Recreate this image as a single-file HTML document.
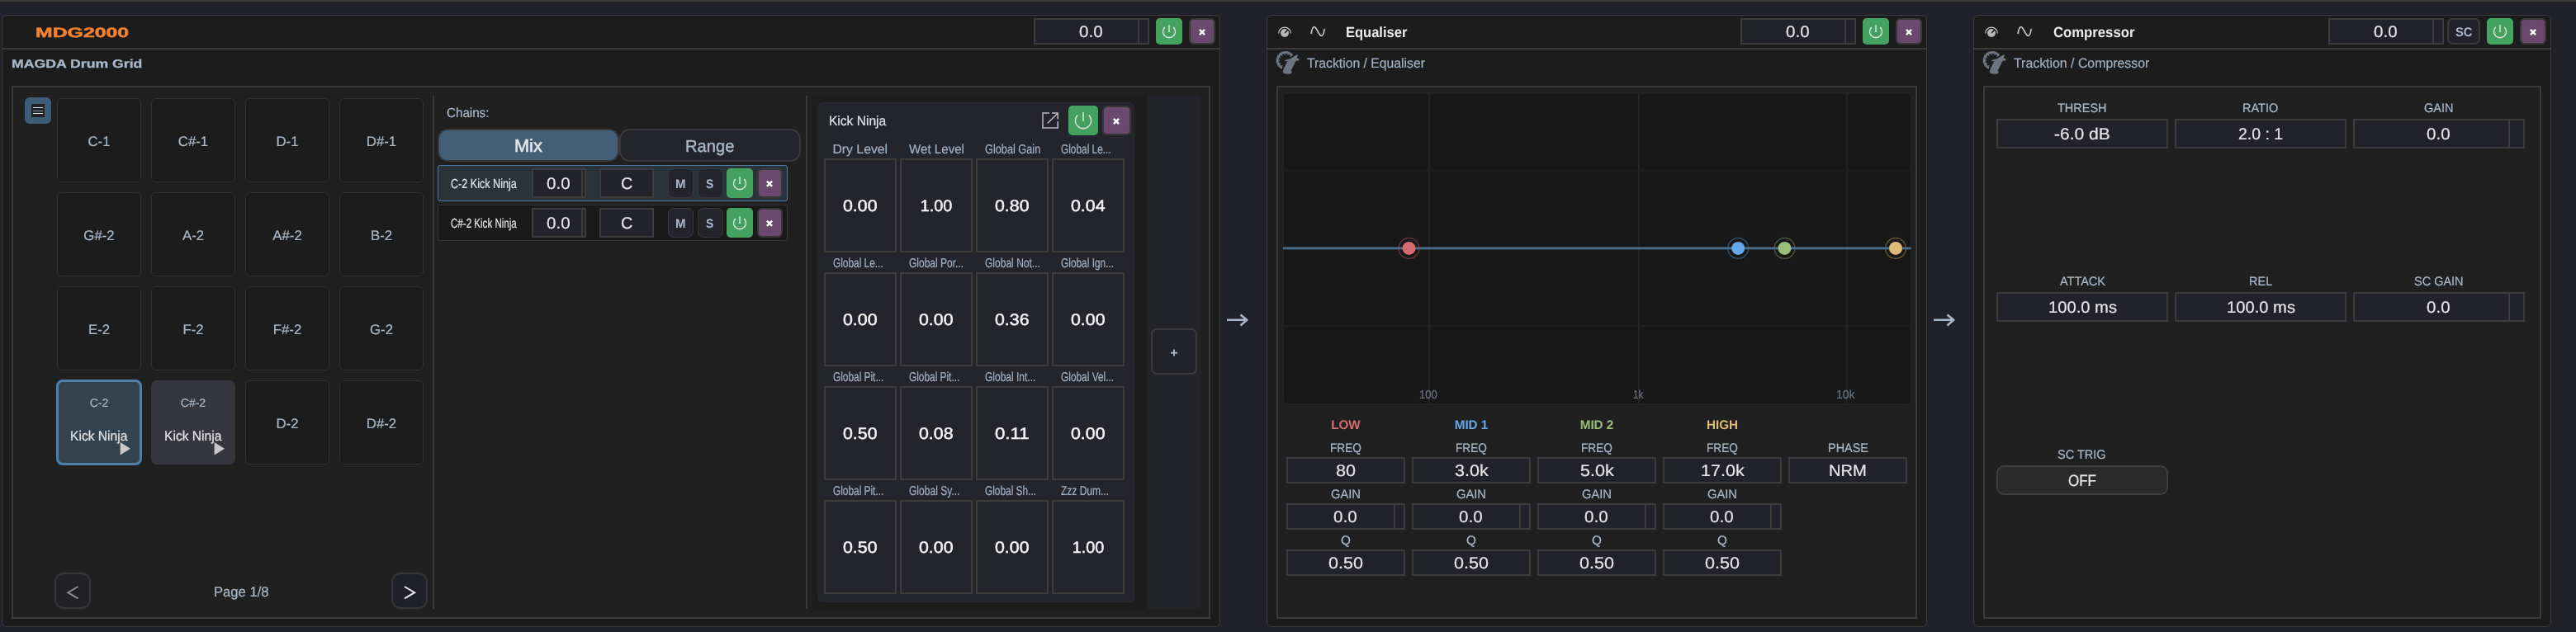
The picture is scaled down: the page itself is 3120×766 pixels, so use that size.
<!DOCTYPE html><html><head><meta charset="utf-8"><title>Device chain</title><style>
html,body{margin:0;padding:0}body{width:3120px;height:766px;overflow:hidden;position:relative;background:#21212b;font-family:"Liberation Sans",sans-serif}
.b{position:absolute;box-sizing:border-box}.t{position:absolute;white-space:nowrap;line-height:1;transform-origin:0 0;text-rendering:geometricPrecision}
#root{position:absolute;left:0;top:0;width:3120px;height:766px;will-change:transform}
</style></head><body><div id="root">
<div class="b" style="left:0px;top:0px;width:3120px;height:2px;background:#3b3b3b;"></div>
<div class="b" style="left:2px;top:18px;width:1476px;height:742px;background:#1c1c1c;border:1px solid #3a3a3a;border-radius:6px;"></div>
<div class="b" style="left:3px;top:58px;width:1474px;height:2px;background:#3a3a3a;"></div>
<div class="b" style="left:14px;top:104px;width:1452px;height:646px;background:#202020;border:2px solid #3a3a3a;"></div>
<div class="b" style="left:1252px;top:22px;width:140px;height:32px;background:#22222a;border:2px solid #3c3c3c;"></div>
<div class="b" style="left:1378px;top:24px;width:2px;height:28px;background:#3c3c3c;"></div>
<span class="t " style="left:1307.20px;top:30.00px;font-size:19.75px;color:#e6e6e6;-webkit-text-stroke:0.22px #e6e6e6;transform:scaleX(1.0418);">0.0</span>
<div class="b" style="left:1400px;top:22px;width:32px;height:32px;background:#43a25f;border-radius:5px"></div>
<svg class="b" style="left:0;top:0" width="3120" height="766"><path d="M1421.57 33.18 A7.5 7.5 0 1 1 1410.43 33.18" fill="none" stroke="#e4e4e4" stroke-width="1.4" stroke-linecap="round"/><path d="M1416.00 30.10 V39.00" stroke="#d4e8da" stroke-width="1.5" fill="none"/></svg>
<div class="b" style="left:1440px;top:22px;width:32px;height:32px;background:#6b486d;border:2px solid #383838;border-radius:6px;"></div>
<svg class="b" style="left:0;top:0" width="3120" height="766"><path d="M1452.90 35.90 L1459.10 42.10 M1459.10 35.90 L1452.90 42.10" stroke="#fff" stroke-width="2.4" fill="none"/></svg>
<span class="t " style="left:42.60px;top:32.00px;font-size:16.50px;color:#f08232;font-weight:bold;-webkit-text-stroke:0.5px #f08232;transform:scaleX(1.5045);">MDG2000</span>
<span class="t " style="left:14.40px;top:71.00px;font-size:14.25px;color:#a8b8c8;font-weight:bold;-webkit-text-stroke:0.3px #a8b8c8;transform:scaleX(1.2399);">MAGDA Drum Grid</span>
<div class="b" style="left:30px;top:118px;width:32px;height:32px;background:#3e5c75;border-radius:6px;"></div>
<div class="b" style="left:38px;top:126px;width:16px;height:16px;background:#22222a;"></div>
<div class="b" style="left:40px;top:130px;width:12px;height:1px;background:#e4e4e4;"></div>
<div class="b" style="left:40px;top:133.5px;width:12px;height:1.5px;background:#8a8a8a;"></div>
<div class="b" style="left:40px;top:137px;width:12px;height:1px;background:#e4e4e4;"></div>
<div class="b" style="left:69px;top:119px;width:102px;height:102px;background:#1c1c1c;border:1px solid #303030;border-radius:6px;"></div>
<span class="t " style="left:106.52px;top:164.00px;font-size:16.75px;color:#a8b8c8;-webkit-text-stroke:0.22px #a8b8c8;">C-1</span>
<div class="b" style="left:183px;top:119px;width:102px;height:102px;background:#1c1c1c;border:1px solid #303030;border-radius:6px;"></div>
<span class="t " style="left:215.83px;top:164.00px;font-size:16.75px;color:#a8b8c8;-webkit-text-stroke:0.22px #a8b8c8;">C#-1</span>
<div class="b" style="left:297px;top:119px;width:102px;height:102px;background:#1c1c1c;border:1px solid #303030;border-radius:6px;"></div>
<span class="t " style="left:334.52px;top:164.00px;font-size:16.75px;color:#a8b8c8;-webkit-text-stroke:0.22px #a8b8c8;">D-1</span>
<div class="b" style="left:411px;top:119px;width:102px;height:102px;background:#1c1c1c;border:1px solid #303030;border-radius:6px;"></div>
<span class="t " style="left:443.83px;top:164.00px;font-size:16.75px;color:#a8b8c8;-webkit-text-stroke:0.22px #a8b8c8;">D#-1</span>
<div class="b" style="left:69px;top:233px;width:102px;height:102px;background:#1c1c1c;border:1px solid #303030;border-radius:6px;"></div>
<span class="t " style="left:101.37px;top:278.00px;font-size:16.75px;color:#a8b8c8;-webkit-text-stroke:0.22px #a8b8c8;">G#-2</span>
<div class="b" style="left:183px;top:233px;width:102px;height:102px;background:#1c1c1c;border:1px solid #303030;border-radius:6px;"></div>
<span class="t " style="left:220.98px;top:278.00px;font-size:16.75px;color:#a8b8c8;-webkit-text-stroke:0.22px #a8b8c8;">A-2</span>
<div class="b" style="left:297px;top:233px;width:102px;height:102px;background:#1c1c1c;border:1px solid #303030;border-radius:6px;"></div>
<span class="t " style="left:330.33px;top:278.00px;font-size:16.75px;color:#a8b8c8;-webkit-text-stroke:0.22px #a8b8c8;">A#-2</span>
<div class="b" style="left:411px;top:233px;width:102px;height:102px;background:#1c1c1c;border:1px solid #303030;border-radius:6px;"></div>
<span class="t " style="left:448.98px;top:278.00px;font-size:16.75px;color:#a8b8c8;-webkit-text-stroke:0.22px #a8b8c8;">B-2</span>
<div class="b" style="left:69px;top:347px;width:102px;height:102px;background:#1c1c1c;border:1px solid #303030;border-radius:6px;"></div>
<span class="t " style="left:106.98px;top:392.00px;font-size:16.75px;color:#a8b8c8;-webkit-text-stroke:0.22px #a8b8c8;">E-2</span>
<div class="b" style="left:183px;top:347px;width:102px;height:102px;background:#1c1c1c;border:1px solid #303030;border-radius:6px;"></div>
<span class="t " style="left:221.44px;top:392.00px;font-size:16.75px;color:#a8b8c8;-webkit-text-stroke:0.22px #a8b8c8;">F-2</span>
<div class="b" style="left:297px;top:347px;width:102px;height:102px;background:#1c1c1c;border:1px solid #303030;border-radius:6px;"></div>
<span class="t " style="left:330.79px;top:392.00px;font-size:16.75px;color:#a8b8c8;-webkit-text-stroke:0.22px #a8b8c8;">F#-2</span>
<div class="b" style="left:411px;top:347px;width:102px;height:102px;background:#1c1c1c;border:1px solid #303030;border-radius:6px;"></div>
<span class="t " style="left:448.06px;top:392.00px;font-size:16.75px;color:#a8b8c8;-webkit-text-stroke:0.22px #a8b8c8;">G-2</span>
<div class="b" style="left:68px;top:460px;width:104px;height:104px;background:#33424f;border:3px solid #4f80aa;border-radius:8px;"></div>
<span class="t " style="left:108.73px;top:481.00px;font-size:14.00px;color:#a8b8c8;-webkit-text-stroke:0.22px #a8b8c8;">C-2</span>
<span class="t " style="left:85.25px;top:521.00px;font-size:16.75px;color:#e2e2e2;-webkit-text-stroke:0.22px #e2e2e2;transform:scaleX(0.9324);">Kick Ninja</span>
<svg class="b" style="left:145px;top:535px" width="14" height="18"><path d="M0.6 1.1 L13 8.85 L0.6 16.6 Z" fill="#c8c8c8"/></svg>
<div class="b" style="left:183px;top:461px;width:102px;height:102px;background:#36363e;border-radius:7px;"></div>
<span class="t " style="left:218.81px;top:481.00px;font-size:14.00px;color:#a8b8c8;-webkit-text-stroke:0.22px #a8b8c8;">C#-2</span>
<span class="t " style="left:199.25px;top:521.00px;font-size:16.75px;color:#e2e2e2;-webkit-text-stroke:0.22px #e2e2e2;transform:scaleX(0.9324);">Kick Ninja</span>
<svg class="b" style="left:259px;top:535px" width="14" height="18"><path d="M0.6 1.1 L13 8.85 L0.6 16.6 Z" fill="#c8c8c8"/></svg>
<div class="b" style="left:297px;top:461px;width:102px;height:102px;background:#1c1c1c;border:1px solid #303030;border-radius:6px;"></div>
<span class="t " style="left:334.52px;top:506.00px;font-size:16.75px;color:#a8b8c8;-webkit-text-stroke:0.22px #a8b8c8;">D-2</span>
<div class="b" style="left:411px;top:461px;width:102px;height:102px;background:#1c1c1c;border:1px solid #303030;border-radius:6px;"></div>
<span class="t " style="left:443.83px;top:506.00px;font-size:16.75px;color:#a8b8c8;-webkit-text-stroke:0.22px #a8b8c8;">D#-2</span>
<div class="b" style="left:66px;top:694px;width:44px;height:44px;background:#222226;border:2px solid #363636;border-radius:11px;"></div>
<div class="b" style="left:474px;top:694px;width:44px;height:44px;background:#20202a;border:2px solid #363636;border-radius:11px;"></div>
<svg class="b" style="left:0;top:0" width="3120" height="766"><path d="M94.5 711 L82.3 718.2 L94.5 725.4" stroke="#8e8e8e" stroke-width="2" fill="none"/><path d="M490 711 L502.2 718.2 L490 725.4" stroke="#e8e8e8" stroke-width="2" fill="none"/></svg>
<span class="t " style="left:258.70px;top:709.00px;font-size:17.00px;color:#a8b8c8;-webkit-text-stroke:0.22px #a8b8c8;transform:scaleX(0.9782);">Page 1/8</span>
<div class="b" style="left:524px;top:116px;width:2px;height:622px;background:#393939;"></div>
<div class="b" style="left:976px;top:116px;width:2px;height:622px;background:#393939;"></div>
<span class="t " style="left:540.60px;top:130.00px;font-size:16.00px;color:#a8b8c8;-webkit-text-stroke:0.22px #a8b8c8;transform:scaleX(0.9476);">Chains:</span>
<div class="b" style="left:530px;top:156px;width:220px;height:40px;background:#446078;border:2px solid #3a3a3a;border-radius:13px;"></div>
<div class="b" style="left:750px;top:156px;width:220px;height:40px;background:#24242c;border:2px solid #3a3a3a;border-radius:13px;"></div>
<span class="t " style="left:623.00px;top:166.00px;font-size:21.75px;color:#e6e6e6;-webkit-text-stroke:0.55px #e6e6e6;">Mix</span>
<span class="t " style="left:830.20px;top:168.00px;font-size:20.50px;color:#a8b8c8;-webkit-text-stroke:0.45px #a8b8c8;transform:scaleX(0.9822);">Range</span>
<div class="b" style="left:530px;top:200px;width:424px;height:44px;background:#2a323a;border:1px solid #4a7aa8;border-radius:3px;"></div>
<span class="t " style="left:546.10px;top:216.00px;font-size:16.00px;color:#e2e2e2;-webkit-text-stroke:0.22px #e2e2e2;transform:scaleX(0.7867);">C-2 Kick Ninja</span>
<div class="b" style="left:644px;top:204px;width:66px;height:36px;background:#23232b;border:2px solid #3c3c3c;"></div>
<div class="b" style="left:704px;top:206px;width:2px;height:32px;background:#3c3c3c;"></div>
<span class="t " style="left:662.30px;top:214.00px;font-size:19.75px;color:#e6e6e6;-webkit-text-stroke:0.22px #e6e6e6;transform:scaleX(1.0418);">0.0</span>
<div class="b" style="left:726px;top:204px;width:66px;height:36px;background:#23232b;border:2px solid #3c3c3c;"></div>
<span class="t " style="left:751.89px;top:214.00px;font-size:19.75px;color:#e6e6e6;-webkit-text-stroke:0.22px #e6e6e6;">C</span>
<div class="b" style="left:808.5px;top:204px;width:31px;height:35.5px;background:#24242c;border:1.5px solid #3a3a3a;border-radius:7px;"></div>
<div class="b" style="left:844.5px;top:204px;width:31px;height:35.5px;background:#24242c;border:1.5px solid #3a3a3a;border-radius:7px;"></div>
<span class="t " style="left:817.80px;top:216.00px;font-size:15.25px;color:#a8b8d0;font-weight:bold;transform:scaleX(0.9816);">M</span>
<span class="t " style="left:855.45px;top:216.00px;font-size:15.25px;color:#a8b8d0;font-weight:bold;transform:scaleX(0.9072);">S</span>
<div class="b" style="left:880px;top:204px;width:32px;height:36px;background:#43a25f;border-radius:5px"></div>
<svg class="b" style="left:0;top:0" width="3120" height="766"><path d="M901.57 217.18 A7.5 7.5 0 1 1 890.43 217.18" fill="none" stroke="#e4e4e4" stroke-width="1.4" stroke-linecap="round"/><path d="M896.00 214.10 V223.00" stroke="#d4e8da" stroke-width="1.5" fill="none"/></svg>
<div class="b" style="left:916.5px;top:204px;width:31px;height:35.5px;background:#6b486d;border:2px solid #383838;border-radius:6px;"></div>
<svg class="b" style="left:0;top:0" width="3120" height="766"><path d="M928.90 219.65 L935.10 225.85 M935.10 219.65 L928.90 225.85" stroke="#fff" stroke-width="2.4" fill="none"/></svg>
<div class="b" style="left:530px;top:248px;width:424px;height:44px;background:#1a1a1a;border:1px solid #343434;border-radius:3px;"></div>
<span class="t " style="left:546.10px;top:264.00px;font-size:16.00px;color:#e2e2e2;-webkit-text-stroke:0.22px #e2e2e2;transform:scaleX(0.7234);">C#-2 Kick Ninja</span>
<div class="b" style="left:644px;top:252px;width:66px;height:36px;background:#23232b;border:2px solid #3c3c3c;"></div>
<div class="b" style="left:704px;top:254px;width:2px;height:32px;background:#3c3c3c;"></div>
<span class="t " style="left:662.30px;top:262.00px;font-size:19.75px;color:#e6e6e6;-webkit-text-stroke:0.22px #e6e6e6;transform:scaleX(1.0418);">0.0</span>
<div class="b" style="left:726px;top:252px;width:66px;height:36px;background:#23232b;border:2px solid #3c3c3c;"></div>
<span class="t " style="left:751.89px;top:262.00px;font-size:19.75px;color:#e6e6e6;-webkit-text-stroke:0.22px #e6e6e6;">C</span>
<div class="b" style="left:808.5px;top:252px;width:31px;height:35.5px;background:#24242c;border:1.5px solid #3a3a3a;border-radius:7px;"></div>
<div class="b" style="left:844.5px;top:252px;width:31px;height:35.5px;background:#24242c;border:1.5px solid #3a3a3a;border-radius:7px;"></div>
<span class="t " style="left:817.80px;top:264.00px;font-size:15.25px;color:#a8b8d0;font-weight:bold;transform:scaleX(0.9816);">M</span>
<span class="t " style="left:855.45px;top:264.00px;font-size:15.25px;color:#a8b8d0;font-weight:bold;transform:scaleX(0.9072);">S</span>
<div class="b" style="left:880px;top:252px;width:32px;height:36px;background:#43a25f;border-radius:5px"></div>
<svg class="b" style="left:0;top:0" width="3120" height="766"><path d="M901.57 265.18 A7.5 7.5 0 1 1 890.43 265.18" fill="none" stroke="#e4e4e4" stroke-width="1.4" stroke-linecap="round"/><path d="M896.00 262.10 V271.00" stroke="#d4e8da" stroke-width="1.5" fill="none"/></svg>
<div class="b" style="left:916.5px;top:252px;width:31px;height:35.5px;background:#6b486d;border:2px solid #383838;border-radius:6px;"></div>
<svg class="b" style="left:0;top:0" width="3120" height="766"><path d="M928.90 267.65 L935.10 273.85 M935.10 267.65 L928.90 273.85" stroke="#fff" stroke-width="2.4" fill="none"/></svg>
<div class="b" style="left:982px;top:116px;width:408px;height:622px;background:#1d1d1d;"></div>
<div class="b" style="left:1390px;top:116px;width:64px;height:622px;background:#23232a;"></div>
<div class="b" style="left:1394px;top:398px;width:56px;height:56px;background:#22222a;border:2px solid #3a3a3a;border-radius:7px;"></div>
<svg class="b" style="left:0;top:0" width="3120" height="766"><path d="M1418 427.6 H1426 M1422 423.6 V431.6" stroke="#b4c2d2" stroke-width="1.8" fill="none"/></svg>
<div class="b" style="left:990px;top:124px;width:384px;height:606px;background:#24242c;border:1px solid #2b2b32;border-radius:6px;"></div>
<span class="t " style="left:1004.30px;top:139.00px;font-size:16.50px;color:#dce2ea;-webkit-text-stroke:0.22px #dce2ea;transform:scaleX(0.9425);">Kick Ninja</span>
<svg class="b" style="left:0;top:0" width="3120" height="766"><path d="M1271 137 H1263 V155 H1281.2 V147 M1274 137 H1281.2 V144.5 M1281 137.2 L1268.7 149.5" stroke="#bcbcbc" stroke-width="1.5" fill="none"/></svg>
<div class="b" style="left:1294px;top:128px;width:36px;height:36px;background:#43a25f;border-radius:5px"></div>
<svg class="b" style="left:0;top:0" width="3120" height="766"><path d="M1319.13 139.78 A9.6 9.6 0 1 1 1304.87 139.78" fill="none" stroke="#e4e4e4" stroke-width="1.4" stroke-linecap="round"/><path d="M1312.00 136.00 V147.00" stroke="#d4e8da" stroke-width="1.5" fill="none"/></svg>
<div class="b" style="left:1334.5px;top:128.3px;width:35px;height:35.3px;background:#6b486d;border:2px solid #383838;border-radius:6px;"></div>
<svg class="b" style="left:0;top:0" width="3120" height="766"><path d="M1348.90 143.85 L1355.10 150.05 M1355.10 143.85 L1348.90 150.05" stroke="#fff" stroke-width="2.4" fill="none"/></svg>
<div class="b" style="left:998px;top:192px;width:88px;height:114px;background:#24242c;border:2px solid #3d3c3b;"></div>
<span class="t " style="left:1008.50px;top:174.00px;font-size:15.75px;color:#9fb0c4;-webkit-text-stroke:0.22px #9fb0c4;">Dry Level</span>
<span class="t " style="left:1021.25px;top:241.00px;font-size:19.75px;color:#f4f4f4;-webkit-text-stroke:0.5px #f4f4f4;transform:scaleX(1.0803);">0.00</span>
<div class="b" style="left:1090px;top:192px;width:88px;height:114px;background:#24242c;border:2px solid #3d3c3b;"></div>
<span class="t " style="left:1100.50px;top:174.00px;font-size:15.75px;color:#9fb0c4;-webkit-text-stroke:0.22px #9fb0c4;transform:scaleX(0.9603);">Wet Level</span>
<span class="t " style="left:1114.75px;top:241.00px;font-size:19.75px;color:#f4f4f4;-webkit-text-stroke:0.5px #f4f4f4;">1.00</span>
<div class="b" style="left:1182px;top:192px;width:88px;height:114px;background:#24242c;border:2px solid #3d3c3b;"></div>
<span class="t " style="left:1192.50px;top:174.00px;font-size:15.75px;color:#9fb0c4;-webkit-text-stroke:0.22px #9fb0c4;transform:scaleX(0.8081);">Global Gain</span>
<span class="t " style="left:1205.25px;top:241.00px;font-size:19.75px;color:#f4f4f4;-webkit-text-stroke:0.5px #f4f4f4;transform:scaleX(1.0803);">0.80</span>
<div class="b" style="left:1274px;top:192px;width:88px;height:114px;background:#24242c;border:2px solid #3d3c3b;"></div>
<span class="t " style="left:1284.50px;top:174.00px;font-size:15.75px;color:#9fb0c4;-webkit-text-stroke:0.22px #9fb0c4;transform:scaleX(0.7535);">Global Le...</span>
<span class="t " style="left:1297.25px;top:241.00px;font-size:19.75px;color:#f4f4f4;-webkit-text-stroke:0.5px #f4f4f4;transform:scaleX(1.0803);">0.04</span>
<div class="b" style="left:998px;top:330px;width:88px;height:114px;background:#24242c;border:2px solid #3d3c3b;"></div>
<span class="t " style="left:1008.50px;top:312.00px;font-size:15.75px;color:#9fb0c4;-webkit-text-stroke:0.22px #9fb0c4;transform:scaleX(0.7535);">Global Le...</span>
<span class="t " style="left:1021.25px;top:379.00px;font-size:19.75px;color:#f4f4f4;-webkit-text-stroke:0.5px #f4f4f4;transform:scaleX(1.0803);">0.00</span>
<div class="b" style="left:1090px;top:330px;width:88px;height:114px;background:#24242c;border:2px solid #3d3c3b;"></div>
<span class="t " style="left:1100.50px;top:312.00px;font-size:15.75px;color:#9fb0c4;-webkit-text-stroke:0.22px #9fb0c4;transform:scaleX(0.7624);">Global Por...</span>
<span class="t " style="left:1113.25px;top:379.00px;font-size:19.75px;color:#f4f4f4;-webkit-text-stroke:0.5px #f4f4f4;transform:scaleX(1.0803);">0.00</span>
<div class="b" style="left:1182px;top:330px;width:88px;height:114px;background:#24242c;border:2px solid #3d3c3b;"></div>
<span class="t " style="left:1192.50px;top:312.00px;font-size:15.75px;color:#9fb0c4;-webkit-text-stroke:0.22px #9fb0c4;transform:scaleX(0.7640);">Global Not...</span>
<span class="t " style="left:1205.25px;top:379.00px;font-size:19.75px;color:#f4f4f4;-webkit-text-stroke:0.5px #f4f4f4;transform:scaleX(1.0803);">0.36</span>
<div class="b" style="left:1274px;top:330px;width:88px;height:114px;background:#24242c;border:2px solid #3d3c3b;"></div>
<span class="t " style="left:1284.50px;top:312.00px;font-size:15.75px;color:#9fb0c4;-webkit-text-stroke:0.22px #9fb0c4;transform:scaleX(0.7551);">Global Ign...</span>
<span class="t " style="left:1297.25px;top:379.00px;font-size:19.75px;color:#f4f4f4;-webkit-text-stroke:0.5px #f4f4f4;transform:scaleX(1.0803);">0.00</span>
<div class="b" style="left:998px;top:468px;width:88px;height:114px;background:#24242c;border:2px solid #3d3c3b;"></div>
<span class="t " style="left:1008.50px;top:450.00px;font-size:15.75px;color:#9fb0c4;-webkit-text-stroke:0.22px #9fb0c4;transform:scaleX(0.7528);">Global Pit...</span>
<span class="t " style="left:1021.25px;top:517.00px;font-size:19.75px;color:#f4f4f4;-webkit-text-stroke:0.5px #f4f4f4;transform:scaleX(1.0803);">0.50</span>
<div class="b" style="left:1090px;top:468px;width:88px;height:114px;background:#24242c;border:2px solid #3d3c3b;"></div>
<span class="t " style="left:1100.50px;top:450.00px;font-size:15.75px;color:#9fb0c4;-webkit-text-stroke:0.22px #9fb0c4;transform:scaleX(0.7528);">Global Pit...</span>
<span class="t " style="left:1113.25px;top:517.00px;font-size:19.75px;color:#f4f4f4;-webkit-text-stroke:0.5px #f4f4f4;transform:scaleX(1.0803);">0.08</span>
<div class="b" style="left:1182px;top:468px;width:88px;height:114px;background:#24242c;border:2px solid #3d3c3b;"></div>
<span class="t " style="left:1192.50px;top:450.00px;font-size:15.75px;color:#9fb0c4;-webkit-text-stroke:0.22px #9fb0c4;transform:scaleX(0.7609);">Global Int...</span>
<span class="t " style="left:1205.25px;top:517.00px;font-size:19.75px;color:#f4f4f4;-webkit-text-stroke:0.5px #f4f4f4;transform:scaleX(1.1237);">0.11</span>
<div class="b" style="left:1274px;top:468px;width:88px;height:114px;background:#24242c;border:2px solid #3d3c3b;"></div>
<span class="t " style="left:1284.50px;top:450.00px;font-size:15.75px;color:#9fb0c4;-webkit-text-stroke:0.22px #9fb0c4;transform:scaleX(0.7551);">Global Vel...</span>
<span class="t " style="left:1297.25px;top:517.00px;font-size:19.75px;color:#f4f4f4;-webkit-text-stroke:0.5px #f4f4f4;transform:scaleX(1.0803);">0.00</span>
<div class="b" style="left:998px;top:606px;width:88px;height:114px;background:#24242c;border:2px solid #3d3c3b;"></div>
<span class="t " style="left:1008.50px;top:588.00px;font-size:15.75px;color:#9fb0c4;-webkit-text-stroke:0.22px #9fb0c4;transform:scaleX(0.7528);">Global Pit...</span>
<span class="t " style="left:1021.25px;top:655.00px;font-size:19.75px;color:#f4f4f4;-webkit-text-stroke:0.5px #f4f4f4;transform:scaleX(1.0803);">0.50</span>
<div class="b" style="left:1090px;top:606px;width:88px;height:114px;background:#24242c;border:2px solid #3d3c3b;"></div>
<span class="t " style="left:1100.50px;top:588.00px;font-size:15.75px;color:#9fb0c4;-webkit-text-stroke:0.22px #9fb0c4;transform:scaleX(0.7651);">Global Sy...</span>
<span class="t " style="left:1113.25px;top:655.00px;font-size:19.75px;color:#f4f4f4;-webkit-text-stroke:0.5px #f4f4f4;transform:scaleX(1.0803);">0.00</span>
<div class="b" style="left:1182px;top:606px;width:88px;height:114px;background:#24242c;border:2px solid #3d3c3b;"></div>
<span class="t " style="left:1192.50px;top:588.00px;font-size:15.75px;color:#9fb0c4;-webkit-text-stroke:0.22px #9fb0c4;transform:scaleX(0.7534);">Global Sh...</span>
<span class="t " style="left:1205.25px;top:655.00px;font-size:19.75px;color:#f4f4f4;-webkit-text-stroke:0.5px #f4f4f4;transform:scaleX(1.0803);">0.00</span>
<div class="b" style="left:1274px;top:606px;width:88px;height:114px;background:#24242c;border:2px solid #3d3c3b;"></div>
<span class="t " style="left:1284.50px;top:588.00px;font-size:15.75px;color:#9fb0c4;-webkit-text-stroke:0.22px #9fb0c4;transform:scaleX(0.7616);">Zzz Dum...</span>
<span class="t " style="left:1298.75px;top:655.00px;font-size:19.75px;color:#f4f4f4;-webkit-text-stroke:0.5px #f4f4f4;">1.00</span>
<svg class="b" style="left:0;top:0" width="3120" height="766"><path d="M1486 387.8 H1509.5 M1502.5 381.4 L1510.2 387.8 L1502.5 394.4" stroke="#a8b8c8" stroke-width="2.6" fill="none" stroke-linejoin="round"/></svg>
<svg class="b" style="left:0;top:0" width="3120" height="766"><path d="M2342 387.8 H2365.5 M2358.5 381.4 L2366.2 387.8 L2358.5 394.4" stroke="#a8b8c8" stroke-width="2.6" fill="none" stroke-linejoin="round"/></svg>
<div class="b" style="left:1534px;top:18px;width:800px;height:742px;background:#1c1c1c;border:1px solid #3a3a3a;border-radius:6px;"></div>
<div class="b" style="left:1535px;top:58px;width:798px;height:2px;background:#3a3a3a;"></div>
<div class="b" style="left:1546px;top:104px;width:776px;height:646px;background:#202020;border:2px solid #3a3a3a;"></div>
<div class="b" style="left:2108px;top:22px;width:140px;height:32px;background:#22222a;border:2px solid #3c3c3c;"></div>
<div class="b" style="left:2234px;top:24px;width:2px;height:28px;background:#3c3c3c;"></div>
<span class="t " style="left:2163.20px;top:30.00px;font-size:19.75px;color:#e6e6e6;-webkit-text-stroke:0.22px #e6e6e6;transform:scaleX(1.0418);">0.0</span>
<div class="b" style="left:2256px;top:22px;width:32px;height:32px;background:#43a25f;border-radius:5px"></div>
<svg class="b" style="left:0;top:0" width="3120" height="766"><path d="M2277.57 33.18 A7.5 7.5 0 1 1 2266.43 33.18" fill="none" stroke="#e4e4e4" stroke-width="1.4" stroke-linecap="round"/><path d="M2272.00 30.10 V39.00" stroke="#d4e8da" stroke-width="1.5" fill="none"/></svg>
<div class="b" style="left:2296px;top:22px;width:32px;height:32px;background:#6b486d;border:2px solid #383838;border-radius:6px;"></div>
<svg class="b" style="left:0;top:0" width="3120" height="766"><path d="M2308.90 35.90 L2315.10 42.10 M2315.10 35.90 L2308.90 42.10" stroke="#fff" stroke-width="2.4" fill="none"/></svg>
<svg class="b" style="left:0;top:0" width="3120" height="766"><path d="M1548.6 40.5 A7.4 7.4 0 1 1 1563.4 40.5" fill="none" stroke="#c4c4c4" stroke-width="1.3"/><circle cx="1556" cy="40" r="5" fill="#b6b6b6"/><path d="M1556.2 39.8 L1559.9 36.1" stroke="#1c1c1c" stroke-width="1.5"/><path d="M1588.2 40.5 C1589.2 34 1590.5 32.7 1591.8 32.7 C1594.8 32.7 1597.4 43.4 1600.5 43.4 C1602.2 43.4 1603.4 40 1604.1 35.6" fill="none" stroke="#c4c4c4" stroke-width="1.7" stroke-linecap="round"/></svg>
<span class="t " style="left:1630.40px;top:31.00px;font-size:17.75px;color:#ececec;font-weight:bold;transform:scaleX(0.9302);">Equaliser</span>
<svg class="b" style="left:1540px;top:58px" width="40" height="36" viewBox="0 0 40 36"><path d="M26.32 8.60 A11.4 11.4 0 1 0 12.46 25.71 L13.64 23.07 A8.5 8.5 0 1 1 23.98 10.30 Z" fill="#6c7682"/><path d="M23.84 9.64 L22.46 10.80 M20.40 7.14 L19.72 8.81 M16.18 6.55 L16.37 8.34 M12.18 8.00 L13.19 9.50 M9.33 11.17 L10.92 12.01 M8.30 15.30 L10.10 15.30 M9.33 19.43 L10.92 18.59 M12.18 22.60 L13.19 21.10 " stroke="#6c7682" stroke-width="1.5" fill="none"/><path d="M32 7.9 L30.8 12.25 L34 13.85 L33.3 15.3 L29.1 16.2 L26.8 21.65 L23.65 27.2 L24.9 29.3 Q24.6 30.5 23.9 30.8 Q22.6 31.7 21.1 31.8 L17.1 31.6 Q15.2 31.3 14.5 30.5 Q13.7 29.7 13.85 28.5 L14.9 25.1 L17.1 20.5 L19.4 16.2 L16.2 15.95 L15.8 14.9 L18.8 14.25 Q21 13.8 22.8 13 Q25 12 26.8 10.5 Q29.5 8.6 32 7.9 Z" fill="#6c7682"/></svg>
<span class="t " style="left:1582.70px;top:69.00px;font-size:16.50px;color:#a0b0c0;-webkit-text-stroke:0.22px #a0b0c0;transform:scaleX(0.9545);">Tracktion / Equaliser</span>
<div class="b" style="left:1553.5px;top:112.5px;width:761.5px;height:377px;background:#181818;border:1px solid #232323;border-radius:4px;"></div>
<svg class="b" style="left:0;top:0" width="3120" height="766"><path d="M1731.0 113 V489" stroke="#232323" stroke-width="2"/><path d="M1985.0 113 V489" stroke="#232323" stroke-width="2"/><path d="M2236.7 113 V489" stroke="#232323" stroke-width="2"/><path d="M1554 206.6 H2314.5" stroke="#1f1f1f" stroke-width="2"/><path d="M1554 300.8 H2314.5" stroke="#1f1f1f" stroke-width="2"/><path d="M1554 394.9 H2314.5" stroke="#1f1f1f" stroke-width="2"/><circle cx="1706.5" cy="300.9" r="12.4" fill="none" stroke="#d66b70" stroke-opacity="0.38" stroke-width="1.4"/><circle cx="2105.2" cy="300.9" r="12.4" fill="none" stroke="#62a8ea" stroke-opacity="0.38" stroke-width="1.4"/><circle cx="2161.5" cy="300.9" r="12.4" fill="none" stroke="#98be78" stroke-opacity="0.38" stroke-width="1.4"/><circle cx="2296.0" cy="300.9" r="12.4" fill="none" stroke="#e2ba78" stroke-opacity="0.38" stroke-width="1.4"/><path d="M1554 300.9 H2314.5" stroke="#4a7090" stroke-width="2.8"/><circle cx="1706.5" cy="300.9" r="8" fill="#d66b70"/><circle cx="2105.2" cy="300.9" r="8" fill="#62a8ea"/><circle cx="2161.5" cy="300.9" r="8" fill="#98be78"/><circle cx="2296.0" cy="300.9" r="8" fill="#e2ba78"/></svg>
<span class="t " style="left:1718.70px;top:472.00px;font-size:14.50px;color:#6a7480;-webkit-text-stroke:0.22px #6a7480;transform:scaleX(0.9003);">100</span>
<span class="t " style="left:1977.70px;top:472.00px;font-size:14.50px;color:#6a7480;-webkit-text-stroke:0.22px #6a7480;transform:scaleX(0.8068);">1k</span>
<span class="t " style="left:2224.20px;top:472.00px;font-size:14.50px;color:#6a7480;-webkit-text-stroke:0.22px #6a7480;transform:scaleX(0.9651);">10k</span>
<span class="t " style="left:1612.20px;top:508.00px;font-size:15.25px;color:#d66b70;font-weight:bold;">LOW</span>
<span class="t " style="left:1611.00px;top:536.00px;font-size:15.25px;color:#a8b8c8;-webkit-text-stroke:0.22px #a8b8c8;transform:scaleX(0.8963);">FREQ</span>
<div class="b" style="left:1558px;top:554px;width:144px;height:32px;background:#22222a;border:2px solid #3c3c3c;"></div>
<span class="t " style="left:1618.05px;top:562.00px;font-size:19.75px;color:#e6e6e6;-webkit-text-stroke:0.22px #e6e6e6;transform:scaleX(1.0900);">80</span>
<span class="t " style="left:1612.00px;top:592.00px;font-size:15.25px;color:#a8b8c8;-webkit-text-stroke:0.22px #a8b8c8;transform:scaleX(0.9655);">GAIN</span>
<div class="b" style="left:1558px;top:610px;width:144px;height:32px;background:#22222a;border:2px solid #3c3c3c;"></div>
<div class="b" style="left:1688px;top:612px;width:2px;height:28px;background:#3c3c3c;"></div>
<span class="t " style="left:1615.20px;top:618.00px;font-size:19.75px;color:#e6e6e6;-webkit-text-stroke:0.22px #e6e6e6;transform:scaleX(1.0418);">0.0</span>
<span class="t " style="left:1624.05px;top:648.00px;font-size:15.25px;color:#a8b8c8;-webkit-text-stroke:0.22px #a8b8c8;">Q</span>
<div class="b" style="left:1558px;top:666px;width:144px;height:32px;background:#22222a;border:2px solid #3c3c3c;"></div>
<span class="t " style="left:1609.06px;top:674.00px;font-size:19.75px;color:#e6e6e6;-webkit-text-stroke:0.22px #e6e6e6;transform:scaleX(1.0900);">0.50</span>
<span class="t " style="left:1761.68px;top:508.00px;font-size:15.25px;color:#62a8ea;font-weight:bold;">MID 1</span>
<span class="t " style="left:1763.00px;top:536.00px;font-size:15.25px;color:#a8b8c8;-webkit-text-stroke:0.22px #a8b8c8;transform:scaleX(0.8963);">FREQ</span>
<div class="b" style="left:1710px;top:554px;width:144px;height:32px;background:#22222a;border:2px solid #3c3c3c;"></div>
<span class="t " style="left:1761.60px;top:562.00px;font-size:19.75px;color:#e6e6e6;-webkit-text-stroke:0.22px #e6e6e6;transform:scaleX(1.0900);">3.0k</span>
<span class="t " style="left:1764.00px;top:592.00px;font-size:15.25px;color:#a8b8c8;-webkit-text-stroke:0.22px #a8b8c8;transform:scaleX(0.9655);">GAIN</span>
<div class="b" style="left:1710px;top:610px;width:144px;height:32px;background:#22222a;border:2px solid #3c3c3c;"></div>
<div class="b" style="left:1840px;top:612px;width:2px;height:28px;background:#3c3c3c;"></div>
<span class="t " style="left:1767.20px;top:618.00px;font-size:19.75px;color:#e6e6e6;-webkit-text-stroke:0.22px #e6e6e6;transform:scaleX(1.0418);">0.0</span>
<span class="t " style="left:1776.05px;top:648.00px;font-size:15.25px;color:#a8b8c8;-webkit-text-stroke:0.22px #a8b8c8;">Q</span>
<div class="b" style="left:1710px;top:666px;width:144px;height:32px;background:#22222a;border:2px solid #3c3c3c;"></div>
<span class="t " style="left:1761.06px;top:674.00px;font-size:19.75px;color:#e6e6e6;-webkit-text-stroke:0.22px #e6e6e6;transform:scaleX(1.0900);">0.50</span>
<span class="t " style="left:1913.68px;top:508.00px;font-size:15.25px;color:#98be78;font-weight:bold;">MID 2</span>
<span class="t " style="left:1915.00px;top:536.00px;font-size:15.25px;color:#a8b8c8;-webkit-text-stroke:0.22px #a8b8c8;transform:scaleX(0.8963);">FREQ</span>
<div class="b" style="left:1862px;top:554px;width:144px;height:32px;background:#22222a;border:2px solid #3c3c3c;"></div>
<span class="t " style="left:1913.60px;top:562.00px;font-size:19.75px;color:#e6e6e6;-webkit-text-stroke:0.22px #e6e6e6;transform:scaleX(1.0900);">5.0k</span>
<span class="t " style="left:1916.00px;top:592.00px;font-size:15.25px;color:#a8b8c8;-webkit-text-stroke:0.22px #a8b8c8;transform:scaleX(0.9655);">GAIN</span>
<div class="b" style="left:1862px;top:610px;width:144px;height:32px;background:#22222a;border:2px solid #3c3c3c;"></div>
<div class="b" style="left:1992px;top:612px;width:2px;height:28px;background:#3c3c3c;"></div>
<span class="t " style="left:1919.20px;top:618.00px;font-size:19.75px;color:#e6e6e6;-webkit-text-stroke:0.22px #e6e6e6;transform:scaleX(1.0418);">0.0</span>
<span class="t " style="left:1928.05px;top:648.00px;font-size:15.25px;color:#a8b8c8;-webkit-text-stroke:0.22px #a8b8c8;">Q</span>
<div class="b" style="left:1862px;top:666px;width:144px;height:32px;background:#22222a;border:2px solid #3c3c3c;"></div>
<span class="t " style="left:1913.06px;top:674.00px;font-size:19.75px;color:#e6e6e6;-webkit-text-stroke:0.22px #e6e6e6;transform:scaleX(1.0900);">0.50</span>
<span class="t " style="left:2066.94px;top:508.00px;font-size:15.25px;color:#e2ba78;font-weight:bold;">HIGH</span>
<span class="t " style="left:2067.00px;top:536.00px;font-size:15.25px;color:#a8b8c8;-webkit-text-stroke:0.22px #a8b8c8;transform:scaleX(0.8963);">FREQ</span>
<div class="b" style="left:2014px;top:554px;width:144px;height:32px;background:#22222a;border:2px solid #3c3c3c;"></div>
<span class="t " style="left:2059.63px;top:562.00px;font-size:19.75px;color:#e6e6e6;-webkit-text-stroke:0.22px #e6e6e6;transform:scaleX(1.0900);">17.0k</span>
<span class="t " style="left:2068.00px;top:592.00px;font-size:15.25px;color:#a8b8c8;-webkit-text-stroke:0.22px #a8b8c8;transform:scaleX(0.9655);">GAIN</span>
<div class="b" style="left:2014px;top:610px;width:144px;height:32px;background:#22222a;border:2px solid #3c3c3c;"></div>
<div class="b" style="left:2144px;top:612px;width:2px;height:28px;background:#3c3c3c;"></div>
<span class="t " style="left:2071.20px;top:618.00px;font-size:19.75px;color:#e6e6e6;-webkit-text-stroke:0.22px #e6e6e6;transform:scaleX(1.0418);">0.0</span>
<span class="t " style="left:2080.05px;top:648.00px;font-size:15.25px;color:#a8b8c8;-webkit-text-stroke:0.22px #a8b8c8;">Q</span>
<div class="b" style="left:2014px;top:666px;width:144px;height:32px;background:#22222a;border:2px solid #3c3c3c;"></div>
<span class="t " style="left:2065.06px;top:674.00px;font-size:19.75px;color:#e6e6e6;-webkit-text-stroke:0.22px #e6e6e6;transform:scaleX(1.0900);">0.50</span>
<span class="t " style="left:2213.50px;top:536.00px;font-size:15.25px;color:#a8b8c8;-webkit-text-stroke:0.22px #a8b8c8;transform:scaleX(0.9478);">PHASE</span>
<div class="b" style="left:2166px;top:554px;width:144px;height:32px;background:#22222a;border:2px solid #3c3c3c;"></div>
<span class="t " style="left:2215.09px;top:562.00px;font-size:19.75px;color:#e6e6e6;-webkit-text-stroke:0.22px #e6e6e6;transform:scaleX(1.0200);">NRM</span>
<div class="b" style="left:2390px;top:18px;width:700px;height:742px;background:#1c1c1c;border:1px solid #3a3a3a;border-radius:6px;"></div>
<div class="b" style="left:2391px;top:58px;width:698px;height:2px;background:#3a3a3a;"></div>
<div class="b" style="left:2402px;top:104px;width:676px;height:646px;background:#202020;border:2px solid #3a3a3a;"></div>
<div class="b" style="left:2820px;top:22px;width:140px;height:32px;background:#22222a;border:2px solid #3c3c3c;"></div>
<div class="b" style="left:2946px;top:24px;width:2px;height:28px;background:#3c3c3c;"></div>
<span class="t " style="left:2875.20px;top:30.00px;font-size:19.75px;color:#e6e6e6;-webkit-text-stroke:0.22px #e6e6e6;transform:scaleX(1.0418);">0.0</span>
<div class="b" style="left:2964px;top:22px;width:40px;height:32px;background:#22222a;border:2px solid #383838;border-radius:7px;"></div>
<span class="t " style="left:2973.75px;top:32.00px;font-size:15.50px;color:#a8b8d0;font-weight:bold;transform:scaleX(0.9515);">SC</span>
<div class="b" style="left:3012px;top:22px;width:32px;height:32px;background:#43a25f;border-radius:5px"></div>
<svg class="b" style="left:0;top:0" width="3120" height="766"><path d="M3033.57 33.18 A7.5 7.5 0 1 1 3022.43 33.18" fill="none" stroke="#e4e4e4" stroke-width="1.4" stroke-linecap="round"/><path d="M3028.00 30.10 V39.00" stroke="#d4e8da" stroke-width="1.5" fill="none"/></svg>
<div class="b" style="left:3052px;top:22px;width:32px;height:32px;background:#6b486d;border:2px solid #383838;border-radius:6px;"></div>
<svg class="b" style="left:0;top:0" width="3120" height="766"><path d="M3064.90 35.90 L3071.10 42.10 M3071.10 35.90 L3064.90 42.10" stroke="#fff" stroke-width="2.4" fill="none"/></svg>
<svg class="b" style="left:0;top:0" width="3120" height="766"><path d="M2404.6 40.5 A7.4 7.4 0 1 1 2419.4 40.5" fill="none" stroke="#c4c4c4" stroke-width="1.3"/><circle cx="2412" cy="40" r="5" fill="#b6b6b6"/><path d="M2412.2 39.8 L2415.9 36.1" stroke="#1c1c1c" stroke-width="1.5"/><path d="M2444.2 40.5 C2445.2 34 2446.5 32.7 2447.8 32.7 C2450.8 32.7 2453.4 43.4 2456.5 43.4 C2458.2 43.4 2459.4 40 2460.1 35.6" fill="none" stroke="#c4c4c4" stroke-width="1.7" stroke-linecap="round"/></svg>
<span class="t " style="left:2486.60px;top:31.00px;font-size:17.75px;color:#ececec;font-weight:bold;transform:scaleX(0.9412);">Compressor</span>
<svg class="b" style="left:2396px;top:58px" width="40" height="36" viewBox="0 0 40 36"><path d="M26.32 8.60 A11.4 11.4 0 1 0 12.46 25.71 L13.64 23.07 A8.5 8.5 0 1 1 23.98 10.30 Z" fill="#6c7682"/><path d="M23.84 9.64 L22.46 10.80 M20.40 7.14 L19.72 8.81 M16.18 6.55 L16.37 8.34 M12.18 8.00 L13.19 9.50 M9.33 11.17 L10.92 12.01 M8.30 15.30 L10.10 15.30 M9.33 19.43 L10.92 18.59 M12.18 22.60 L13.19 21.10 " stroke="#6c7682" stroke-width="1.5" fill="none"/><path d="M32 7.9 L30.8 12.25 L34 13.85 L33.3 15.3 L29.1 16.2 L26.8 21.65 L23.65 27.2 L24.9 29.3 Q24.6 30.5 23.9 30.8 Q22.6 31.7 21.1 31.8 L17.1 31.6 Q15.2 31.3 14.5 30.5 Q13.7 29.7 13.85 28.5 L14.9 25.1 L17.1 20.5 L19.4 16.2 L16.2 15.95 L15.8 14.9 L18.8 14.25 Q21 13.8 22.8 13 Q25 12 26.8 10.5 Q29.5 8.6 32 7.9 Z" fill="#6c7682"/></svg>
<span class="t " style="left:2438.70px;top:69.00px;font-size:16.50px;color:#a0b0c0;-webkit-text-stroke:0.22px #a0b0c0;transform:scaleX(0.9616);">Tracktion / Compressor</span>
<span class="t " style="left:2492.23px;top:124.00px;font-size:15.25px;color:#a8b8c8;-webkit-text-stroke:0.22px #a8b8c8;transform:scaleX(0.9500);">THRESH</span>
<div class="b" style="left:2418px;top:144px;width:208px;height:36px;background:#22222a;border:2px solid #3c3c3c;"></div>
<span class="t " style="left:2488.10px;top:154.00px;font-size:19.75px;color:#e6e6e6;-webkit-text-stroke:0.22px #e6e6e6;transform:scaleX(1.0645);">-6.0 dB</span>
<span class="t " style="left:2716.41px;top:124.00px;font-size:15.25px;color:#a8b8c8;-webkit-text-stroke:0.22px #a8b8c8;transform:scaleX(0.9500);">RATIO</span>
<div class="b" style="left:2634px;top:144px;width:208px;height:36px;background:#22222a;border:2px solid #3c3c3c;"></div>
<span class="t " style="left:2710.90px;top:154.00px;font-size:19.75px;color:#e6e6e6;-webkit-text-stroke:0.22px #e6e6e6;transform:scaleX(0.9872);">2.0 : 1</span>
<span class="t " style="left:2936.29px;top:124.00px;font-size:15.25px;color:#a8b8c8;-webkit-text-stroke:0.22px #a8b8c8;transform:scaleX(0.9500);">GAIN</span>
<div class="b" style="left:2850px;top:144px;width:208px;height:36px;background:#22222a;border:2px solid #3c3c3c;"></div>
<div class="b" style="left:3038px;top:146px;width:2px;height:32px;background:#3c3c3c;"></div>
<span class="t " style="left:2939.20px;top:154.00px;font-size:19.75px;color:#e6e6e6;-webkit-text-stroke:0.22px #e6e6e6;transform:scaleX(1.0418);">0.0</span>
<span class="t " style="left:2494.51px;top:334.00px;font-size:15.25px;color:#a8b8c8;-webkit-text-stroke:0.22px #a8b8c8;transform:scaleX(0.9500);">ATTACK</span>
<div class="b" style="left:2418px;top:354px;width:208px;height:36px;background:#22222a;border:2px solid #3c3c3c;"></div>
<span class="t " style="left:2480.50px;top:364.00px;font-size:19.75px;color:#e6e6e6;-webkit-text-stroke:0.22px #e6e6e6;transform:scaleX(1.0213);">100.0 ms</span>
<span class="t " style="left:2723.91px;top:334.00px;font-size:15.25px;color:#a8b8c8;-webkit-text-stroke:0.22px #a8b8c8;transform:scaleX(0.9500);">REL</span>
<div class="b" style="left:2634px;top:354px;width:208px;height:36px;background:#22222a;border:2px solid #3c3c3c;"></div>
<span class="t " style="left:2696.50px;top:364.00px;font-size:19.75px;color:#e6e6e6;-webkit-text-stroke:0.22px #e6e6e6;transform:scaleX(1.0213);">100.0 ms</span>
<span class="t " style="left:2924.23px;top:334.00px;font-size:15.25px;color:#a8b8c8;-webkit-text-stroke:0.22px #a8b8c8;transform:scaleX(0.9500);">SC GAIN</span>
<div class="b" style="left:2850px;top:354px;width:208px;height:36px;background:#22222a;border:2px solid #3c3c3c;"></div>
<div class="b" style="left:3038px;top:356px;width:2px;height:32px;background:#3c3c3c;"></div>
<span class="t " style="left:2939.20px;top:364.00px;font-size:19.75px;color:#e6e6e6;-webkit-text-stroke:0.22px #e6e6e6;transform:scaleX(1.0418);">0.0</span>
<span class="t " style="left:2492.24px;top:544.00px;font-size:15.25px;color:#a8b8c8;-webkit-text-stroke:0.22px #a8b8c8;transform:scaleX(0.9500);">SC TRIG</span>
<div class="b" style="left:2418px;top:564px;width:208px;height:36px;background:#2a2a2a;border:2px solid #3e3e3e;border-radius:9px;"></div>
<span class="t " style="left:2505.30px;top:574.00px;font-size:19.50px;color:#e6e6e6;-webkit-text-stroke:0.22px #e6e6e6;transform:scaleX(0.8718);">OFF</span>
</div></body></html>
